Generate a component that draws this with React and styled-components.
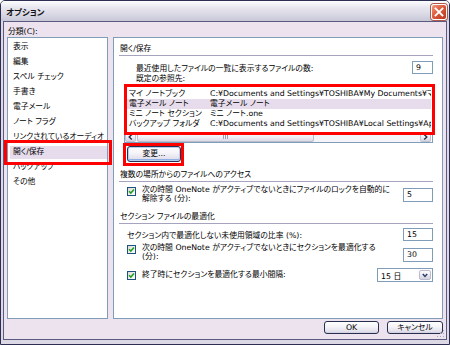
import React from "react";
import styled, { createGlobalStyle } from "styled-components";

const FONT = `"DejaVu Sans", "Noto Sans CJK JP", sans-serif`;

const GlobalStyle = createGlobalStyle`
  html, body { margin: 0; padding: 0; background: #ffffff; }
  body { width: 450px; height: 345px; overflow: hidden; }
  * { box-sizing: border-box; }
`;

const Window = styled.div`
  width: 450px;
  height: 345px;
  border: 1px solid #2e2e52;
  border-radius: 5px 5px 0 0;
  background: #dcd8e6;
  display: flex;
  flex-direction: column;
  overflow: hidden;
  font-family: ${FONT};
  font-size: 7.8px;
  font-feature-settings: "palt";
  color: #000;
`;

const TitleBar = styled.div`
  flex: none;
  height: 20px;
  display: flex;
  align-items: flex-start;
  justify-content: space-between;
  padding: 0 2px 0 5px;
  background: linear-gradient(#fdfdfe 0%, #e9e8f0 30%, #dad9e5 65%, #c8c7d7 100%);
`;

const TitleText = styled.div`
  margin-top: 6px;
  line-height: 10px;
  font-size: 8.5px;
  font-weight: bold;
  color: #111;
`;

const CloseButton = styled.div`
  margin-top: 3px;
  width: 16px;
  height: 16px;
  border-radius: 3px;
  border: 1px solid #ffffff;
  box-shadow: 0 0 0 1px #b0584a;
  background: linear-gradient(135deg, #f29a7f 0%, #dc5a3d 45%, #b9361d 100%);
  display: flex;
  align-items: center;
  justify-content: center;
`;

const Body = styled.div`
  position: relative;
  flex: 1;
  display: flex;
  flex-direction: column;
  margin: 0 2px 4px 2px;
  border: 1px solid #5b5b80;
  background: #ece3ee;
  padding: 5px 3px 0 3px;
`;

const GroupLabel = styled.div`
  line-height: 10px;
  height: 10px;
  padding-left: 1px;
`;

const Columns = styled.div`
  display: flex;
  gap: 5px;
  height: 282px;
  flex: none;
`;

const CategoryList = styled.div`
  width: 101px;
  height: 282px;
  flex: none;
  border: 1px solid #7f9db9;
  background: #ffffff;
  padding-top: 1px;
  display: flex;
  flex-direction: column;
`;

const CategoryItem = styled.div`
  position: relative;
  height: 15px;
  line-height: 15px;
  margin-left: 2px;
  padding-left: 3px;
  white-space: nowrap;
  background: ${(p) =>
    p.$selected
      ? "linear-gradient(transparent 2px, #e7dcec 2px, #e7dcec 100%)"
      : "transparent"};
`;

const RedMark = styled.div`
  position: absolute;
  top: ${(p) => p.$t}px;
  left: ${(p) => p.$l}px;
  right: ${(p) => p.$r}px;
  bottom: ${(p) => (p.$b === undefined ? "auto" : `${p.$b}px`)};
  height: ${(p) => (p.$h ? `${p.$h}px` : "auto")};
  border: 3px solid #ff0000;
  pointer-events: none;
  z-index: 2;
`;

const Panel = styled.div`
  width: 330px;
  height: 282px;
  flex: none;
  border: 1px solid #7f9db9;
  background: #ffffff;
  padding: 0 9px 0 5px;
  display: flex;
  flex-direction: column;
`;

const SectionHeader = styled.div`
  margin-top: ${(p) => p.$mt}px;
  line-height: 10px;
  height: 12px;
  padding: 0 0 1px 1px;
  border-bottom: 1px solid #a6a3bf;
`;

const NumberRow = styled.div`
  display: flex;
  align-items: center;
  justify-content: space-between;
  margin-top: ${(p) => p.$mt}px;
  padding-left: ${(p) => p.$indent}px;
  height: 13px;
`;

const PlainLabel = styled.div`
  line-height: 10px;
  height: 10px;
  margin-left: 17px;
`;

const NumberBox = styled.div`
  flex: none;
  width: ${(p) => p.$w}px;
  height: ${(p) => p.$h}px;
  margin-top: ${(p) => p.$mt || 0}px;
  border: 1px solid #7f9db9;
  background: #fff;
  padding-left: 3px;
  line-height: ${(p) => p.$h - 2}px;
`;

const ListBox = styled.div`
  position: relative;
  margin-left: 5px;
  height: 59px;
  flex: none;
  border: 1px solid #7f9db9;
  background: #fff;
  display: flex;
  flex-direction: column;
`;

const ListRows = styled.div`
  padding: 4px 0 3px 0;
  display: flex;
  flex-direction: column;
`;

const ListRow = styled.div`
  display: flex;
  height: 10px;
  line-height: 10px;
  margin: 0 1px 0 2px;
  padding-left: 2px;
  white-space: nowrap;
  overflow: hidden;
  background: ${(p) => (p.$selected ? "#e7dcec" : "transparent")};
`;

const NameCell = styled.div`
  width: 81px;
  flex: none;
`;

const PathCell = styled.div`
  flex: none;
`;

const HScroll = styled.div`
  height: 10px;
  display: flex;
  align-items: stretch;
  background: #f4f3f8;
  margin-right: 1px;
`;

const ScrollArrow = styled.div`
  width: 11px;
  flex: none;
  border: 1px solid #c3c2d4;
  border-radius: 2px;
  background: linear-gradient(#ffffff, #e9e8f0 60%, #d4d3e0);
  display: flex;
  align-items: center;
  justify-content: center;
`;

const ScrollTrack = styled.div`
  flex: 1;
  display: flex;
  padding: 0 0 0 1px;
`;

const ScrollThumb = styled.div`
  width: 177px;
  border: 1px solid #bdbccf;
  border-radius: 2px;
  background: linear-gradient(#ffffff, #efeef5 55%, #dcdbe7);
  display: flex;
  align-items: center;
  justify-content: center;
  gap: 1px;
`;

const GripLine = styled.div`
  width: 1px;
  height: 4px;
  background: #9f9eb6;
`;

const FocusFrame = styled.div`
  align-self: flex-start;
  margin-left: 4px;
  border: 3px solid #ff0000;
  padding: 0 0 1px 1px;
`;

const PushButton = styled.div`
  width: ${(p) => p.$w}px;
  height: ${(p) => p.$h}px;
  border: 1px solid #27304f;
  border-radius: 3px;
  background: linear-gradient(#ffffff 0%, #f4f3f8 45%, #e2e0ea 85%, #cfcddc 100%);
  box-shadow: ${(p) =>
    p.$focus ? "inset 0 0 0 1px #b8cdf0, inset 0 -1px 0 1px #8fb0e6" : "none"};
  display: flex;
  align-items: center;
  justify-content: center;
  line-height: 10px;
  flex: none;
`;

const CheckRow = styled.div`
  display: flex;
  align-items: ${(p) => (p.$center ? "center" : "flex-start")};
  margin-top: ${(p) => p.$mt}px;
  padding-left: 8px;
  min-height: ${(p) => (p.$center ? "14px" : "0")};
`;

const CheckBox = styled.div`
  flex: none;
  width: 9px;
  height: 9px;
  margin-top: ${(p) => (p.$center ? 0 : 1)}px;
  border: 1px solid #1c5180;
  background: linear-gradient(135deg, #dcdcd7, #ffffff);
  display: flex;
  align-items: center;
  justify-content: center;
`;

const CheckText = styled.div`
  flex: 1;
  margin-left: 6px;
  line-height: 8.5px;
  white-space: nowrap;
`;

const SingleText = styled.div`
  flex: 1;
  margin-left: 6px;
  line-height: 10px;
  white-space: nowrap;
`;

const Combo = styled.div`
  flex: none;
  width: 56px;
  height: 14px;
  border: 1px solid #7f9db9;
  background: #fff;
  display: flex;
  align-items: center;
  justify-content: space-between;
  padding: 1px 1px 1px 3px;
`;

const ComboButton = styled.div`
  width: 12px;
  height: 10px;
  border: 1px solid #bcbbd0;
  border-radius: 2px;
  background: linear-gradient(#ffffff, #e6e5ee 60%, #d2d1df);
  display: flex;
  align-items: center;
  justify-content: center;
`;

const Footer = styled.div`
  display: flex;
  justify-content: flex-end;
  gap: 8px;
  margin-top: 2px;
`;

const Grip = styled.svg`
  position: absolute;
  right: 1px;
  bottom: 1px;
`;

const categories = [
  "表示",
  "編集",
  "スペル チェック",
  "手書き",
  "電子メール",
  "ノート フラグ",
  "リンクされているオーディオ",
  "開く/保存",
  "バックアップ",
  "その他",
];

const locations = [
  ["マイ ノートブック", "C:¥Documents and Settings¥TOSHIBA¥My Documents¥マイ ノートブック"],
  ["電子メール ノート", "電子メール ノート"],
  ["ミニ ノート セクション", "ミニ ノート.one"],
  ["バックアップ フォルダ", "C:¥Documents and Settings¥TOSHIBA¥Local Settings¥Application Data"],
];

const Check = ({ center }) => (
  <CheckBox $center={center}>
    <svg width="7" height="7" viewBox="0 0 7 7">
      <path d="M1 3.2 L2.8 5 L6 1.5" fill="none" stroke="#21a121" strokeWidth="1.6" />
    </svg>
  </CheckBox>
);

const Arrow = ({ dir }) => (
  <svg width="5" height="6" viewBox="0 0 5 6">
    <path
      d={dir === "left" ? "M3.8 0.5 L1.2 3 L3.8 5.5" : "M1.2 0.5 L3.8 3 L1.2 5.5"}
      fill="none"
      stroke="#2b2f4a"
      strokeWidth="1.4"
    />
  </svg>
);

export default function App() {
  return (
    <>
      <GlobalStyle />
      <Window>
        <TitleBar>
          <TitleText>オプション</TitleText>
          <CloseButton>
            <svg width="10" height="10" viewBox="0 0 10 10">
              <path d="M1.5 1.5 L8.5 8.5 M8.5 1.5 L1.5 8.5" stroke="#ffffff" strokeWidth="1.8" strokeLinecap="square" />
            </svg>
          </CloseButton>
        </TitleBar>
        <Body>
          <GroupLabel>分類(C):</GroupLabel>
          <Columns>
            <CategoryList>
              {categories.map((c) => (
                <CategoryItem key={c} $selected={c === "開く/保存"}>
                  {c}
                  {c === "開く/保存" && <RedMark $t={-4} $l={-6} $r={-5} $b={-6} />}
                </CategoryItem>
              ))}
            </CategoryList>
            <Panel>
              <SectionHeader $mt={6}>開く/保存</SectionHeader>
              <NumberRow $mt={5} $indent={17}>
                <span>最近使用したファイルの一覧に表示するファイルの数:</span>
                <NumberBox $w={21} $h={13}>9</NumberBox>
              </NumberRow>
              <PlainLabel>既定の参照先:</PlainLabel>
              <ListBox>
                <ListRows>
                  {locations.map(([n, p], i) => (
                    <ListRow key={n} $selected={i === 1}>
                      <NameCell>{n}</NameCell>
                      <PathCell>{p}</PathCell>
                    </ListRow>
                  ))}
                </ListRows>
                <HScroll>
                  <ScrollArrow>
                    <Arrow dir="left" />
                  </ScrollArrow>
                  <ScrollTrack>
                    <ScrollThumb>
                      <GripLine />
                      <GripLine />
                      <GripLine />
                    </ScrollThumb>
                  </ScrollTrack>
                  <ScrollArrow>
                    <Arrow dir="right" />
                  </ScrollArrow>
                </HScroll>
                <RedMark $t={-1} $l={-1} $r={-3} $h={51} />
              </ListBox>
              <FocusFrame>
                <PushButton $w={54} $h={16} $focus>変更...</PushButton>
              </FocusFrame>

              <SectionHeader $mt={4}>複数の場所からのファイルへのアクセス</SectionHeader>
              <CheckRow $mt={4}>
                <Check />
                <CheckText>
                  次の時間 OneNote がアクティブでないときにファイルのロックを自動的に
                  <br />
                  解除する (分):
                </CheckText>
                <NumberBox $w={30} $h={14} $mt={2}>5</NumberBox>
              </CheckRow>

              <SectionHeader $mt={9}>セクション ファイルの最適化</SectionHeader>
              <NumberRow $mt={4} $indent={8}>
                <span>セクション内で最適化しない未使用領域の比率 (%):</span>
                <NumberBox $w={30} $h={13}>15</NumberBox>
              </NumberRow>
              <CheckRow $mt={3}>
                <Check />
                <CheckText>
                  次の時間 OneNote がアクティブでないときにセクションを最適化する
                  <br />
                  (分):
                </CheckText>
                <NumberBox $w={30} $h={14} $mt={4}>30</NumberBox>
              </CheckRow>
              <CheckRow $mt={6} $center>
                <Check center />
                <SingleText>終了時にセクションを最適化する最小間隔:</SingleText>
                <Combo>
                  <span>15 日</span>
                  <ComboButton>
                    <svg width="6" height="5" viewBox="0 0 6 5">
                      <path d="M0.8 1 L3 3.5 L5.2 1" fill="none" stroke="#2a3d6a" strokeWidth="1.4" />
                    </svg>
                  </ComboButton>
                </Combo>
              </CheckRow>
            </Panel>
          </Columns>
          <Footer>
            <PushButton $w={55} $h={13}>OK</PushButton>
            <PushButton $w={56} $h={13}>キャンセル</PushButton>
          </Footer>
          <Grip width="8" height="8" viewBox="0 0 8 8">
            <rect x="6" y="0" width="1" height="1" fill="#a7a5bb" />
            <rect x="3" y="3" width="1" height="1" fill="#a7a5bb" />
            <rect x="6" y="3" width="1" height="1" fill="#a7a5bb" />
            <rect x="0" y="6" width="1" height="1" fill="#a7a5bb" />
            <rect x="3" y="6" width="1" height="1" fill="#a7a5bb" />
            <rect x="6" y="6" width="1" height="1" fill="#a7a5bb" />
          </Grip>
        </Body>
      </Window>
    </>
  );
}
